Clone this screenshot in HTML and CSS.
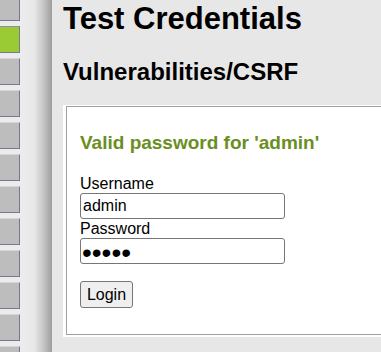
FILE: index.html
```html
<!DOCTYPE html>
<html lang="en">
<head>
<meta charset="utf-8">
<title>Test Credentials</title>
<link rel="stylesheet" href="styles.css">
</head>
<body>
<div class="page">
  <aside class="sidebar">
    <ul class="menu">
      <li class="menu-item"></li>
      <li class="menu-item active"></li>
      <li class="menu-item"></li>
      <li class="menu-item"></li>
      <li class="menu-item"></li>
      <li class="menu-item"></li>
      <li class="menu-item"></li>
      <li class="menu-item"></li>
      <li class="menu-item"></li>
      <li class="menu-item"></li>
      <li class="menu-item"></li>
      <li class="menu-item"></li>
    </ul>
  </aside>
  <main class="content">
    <h1 class="title">Test Credentials</h1>
    <h2 class="subtitle">Vulnerabilities/CSRF</h2>
    <div class="code-area">
      <div class="code-inner">
        <h3 class="message">Valid password for 'admin'</h3>
        <form class="login" onsubmit="return false">
          <label class="field-label" for="user">Username</label>
          <input class="field" id="user" type="text" value="admin">
          <label class="field-label" for="pass">Password</label>
          <input class="field field-secret" id="pass" type="password" value="admin">
          <button class="btn" type="submit">Login</button>
        </form>
      </div>
    </div>
  </main>
</div>
</body>
</html>
```

FILE: styles.css
```css
html, body {
  margin: 0;
  padding: 0;
  height: 100%;
  overflow: hidden;
}

body {
  background: #e7e7e7;
  font-family: "Liberation Sans", Arial, sans-serif;
  color: #000;
}

.page {
  display: flex;
  height: 100%;
  overflow: hidden;
}

.sidebar {
  flex: 0 0 53px;
  background: linear-gradient(to right,
    #ececec 0, #ececec 20px, #e9e9e9 34px, #c4c4c4 44px, #9c9c9c 52px, #e8e8e8 52px, #e8e8e8 53px);
  overflow: hidden;
}

.menu {
  list-style: none;
  margin: -6px 0 0 0;
  padding: 0;
  width: 20px;
  display: flex;
  flex-direction: column;
  gap: 5px;
}

.menu-item {
  box-sizing: border-box;
  flex: 0 0 27px;
  height: 27px;
  background: #bdbdbd;
  border-top: 1px solid #d6d6d6;
  border-right: 1px solid #747a90;
  border-bottom: 1px solid #747a90;
}

.menu-item.active {
  background: #9acb34;
  border-top-color: #8a92a8;
}

.content {
  flex: 1;
  padding: 1px 0 0 10px;
  min-width: 0;
}

.title {
  margin: 0;
  font-size: 31px;
  line-height: 36px;
  font-weight: bold;
}

.subtitle {
  margin: 21px 0 0 0;
  font-size: 24px;
  line-height: 28px;
  font-weight: bold;
}

.code-area {
  margin-top: 19px;
  background: #fff;
  padding: 1px 0 2px 3px;
}

.code-inner {
  border-top: 1px solid #a0a0a0;
  border-left: 1px solid #a0a0a0;
  border-bottom: 1px solid #a0a0a0;
  padding: 25px 0 26px 13px;
}

.message {
  margin: 0;
  font-size: 19px;
  line-height: 22px;
  font-weight: bold;
  color: #6b8e23;
}

.login {
  margin-top: 20px;
  display: flex;
  flex-direction: column;
  align-items: flex-start;
}

.field-label {
  font-size: 16px;
  line-height: 19px;
}

.field {
  box-sizing: border-box;
  width: 205px;
  height: 26px;
  margin: 0;
  padding: 0 2px;
  border: 1px solid #767676;
  border-radius: 3px;
  background: #fff;
  font-family: "Liberation Sans", Arial, sans-serif;
  font-size: 16px;
  color: #000;
}

.field-secret {
  font-size: 28px;
  padding: 4px 1px 0 1px;
  line-height: 20px;
}

.btn {
  box-sizing: border-box;
  margin-top: 17px;
  width: 53px;
  height: 27px;
  padding: 0;
  border: 1px solid #767676;
  border-radius: 3px;
  background: #efefef;
  font-family: "Liberation Sans", Arial, sans-serif;
  font-size: 16px;
  color: #000;
}
```
